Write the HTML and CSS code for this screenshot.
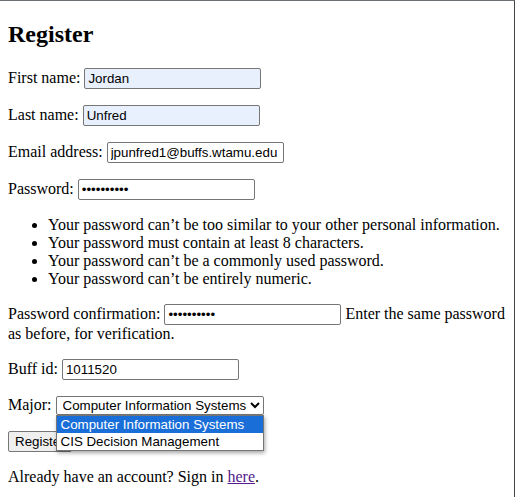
FILE: index.html
```html
<!DOCTYPE html>
<html>
<head>
<meta charset="utf-8">
<title>Register</title>
<link rel="stylesheet" href="styles.css">
</head>
<body>
<h2>Register</h2>
<form class="register-form">
  <p>First name: <input type="text" class="field autofill" value="Jordan"></p>
  <p>Last name: <input type="text" class="field autofill" value="Unfred"></p>
  <p>Email address: <input type="email" class="field" value="jpunfred1@buffs.wtamu.edu"></p>
  <p>Password: <input type="password" class="field" value="abcdefghij"></p>
  <ul class="help-list">
    <li>Your password can’t be too similar to your other personal information.</li>
    <li>Your password must contain at least 8 characters.</li>
    <li>Your password can’t be a commonly used password.</li>
    <li>Your password can’t be entirely numeric.</li>
  </ul>
  <p>Password confirmation: <input type="password" class="field" value="abcdefghij"> Enter the same password as before, for verification.</p>
  <p>Buff id: <input type="text" class="field" value="1011520"></p>
  <p>Major: <span class="select-wrap"><select class="major">
      <option selected>Computer Information Systems</option>
      <option>CIS Decision Management</option>
    </select><span class="popup">
      <span class="opt opt-active">Computer Information Systems</span>
      <span class="opt">CIS Decision Management</span>
    </span></span></p>
  <button type="submit" class="btn">Register</button>
</form>
<p>Already have an account? Sign in <a href="#" class="link">here</a>.</p>
</body>
</html>
```

FILE: styles.css
```css
html {
  border-top: 1px solid #6b7075;
  border-right: 1px solid #454545;
  min-height: 100%;
  box-sizing: border-box;
  background: #fff;
}

body {
  margin: 0 8px 8px 8px;
  font-family: "Liberation Serif", "Times New Roman", serif;
  font-size: 16px;
  color: #000;
}

h2 {
  font-size: 24px;
  font-weight: bold;
  margin: 0 0 19.92px 0;
  padding-top: 20px;
}

p {
  margin: 16px 0;
}

.field {
  font-family: "Liberation Sans", Arial, sans-serif;
  font-size: 13.333px;
  padding: 1px 3px;
  border: 1px solid #767676;
  border-radius: 2px;
  background: #fff;
  color: #000;
  width: 177px;
  height: 21px;
  box-sizing: border-box;
}

.autofill {
  background: #e8f0fe;
}

.help-list {
  margin: 16px 0;
  padding-left: 40px;
}

.select-wrap {
  position: relative;
  display: inline-block;
}

.major {
  font-family: "Liberation Sans", Arial, sans-serif;
  font-size: 13.333px;
  color: #000;
  border: 1px solid #767676;
  border-radius: 2px;
  background: #fff;
  height: 19px;
  width: 208px;
  padding: 0 0 0 2px;
}

.popup {
  position: absolute;
  left: 0;
  top: 100%;
  width: 208px;
  box-sizing: border-box;
  border: 1px solid #767676;
  background: #fff;
  box-shadow: 1px 2px 4px rgba(0, 0, 0, 0.35);
  display: flex;
  flex-direction: column;
  z-index: 5;
}

.opt {
  display: block;
  font-family: "Liberation Sans", Arial, sans-serif;
  font-size: 13.333px;
  line-height: 17px;
  padding: 0 4px;
  color: #000;
  white-space: nowrap;
}

.opt-active {
  background: #1a6ed8;
  color: #fff;
}

.btn {
  font-family: "Liberation Sans", Arial, sans-serif;
  font-size: 13.333px;
  padding: 1px 6px;
  border: 1px solid #767676;
  border-radius: 2px;
  background: #efefef;
  color: #000;
  height: 21px;
}

.link {
  color: #551a8b;
}
```
